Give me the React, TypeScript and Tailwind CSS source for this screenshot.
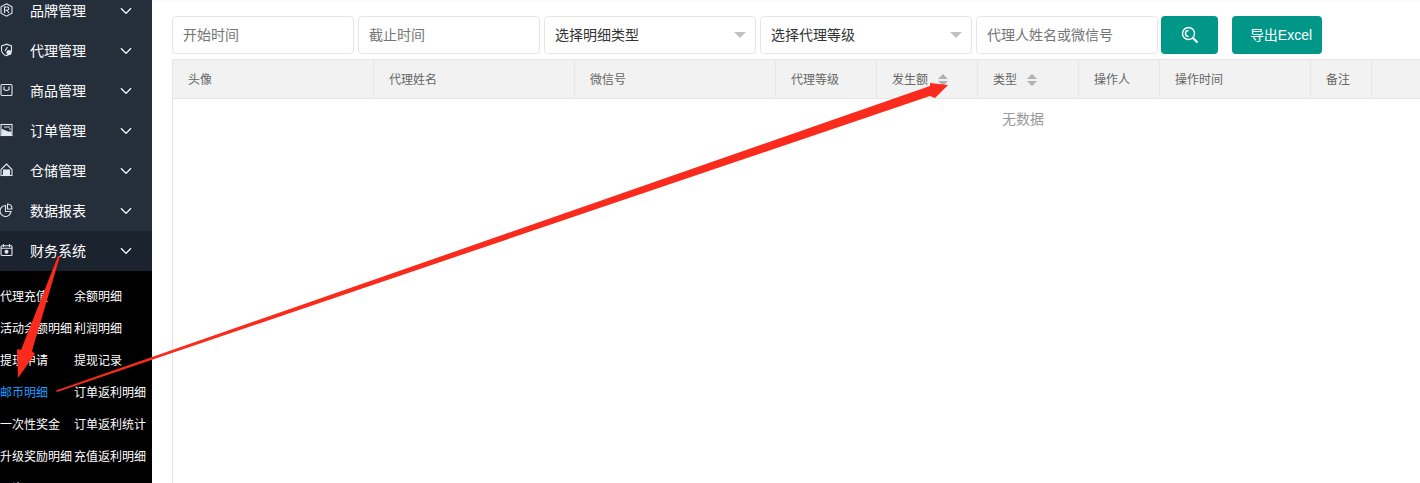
const menus = ["品牌管理", "代理管理", "商品管理", "订单管理", "仓储管理", "数据报表"];

const subItems = [
  ["代理充值", "余额明细"],
  ["活动余额明细", "利润明细"],
  ["提现申请", "提现记录"],
  ["邮币明细", "订单返利明细"],
  ["一次性奖金", "订单返利统计"],
  ["升级奖励明细", "充值返利明细"],
  ["工资", ""],
];

const columns = [
  { label: "头像", width: "w-[201px]" },
  { label: "代理姓名", width: "w-[201px]" },
  { label: "微信号", width: "w-[201px]" },
  { label: "代理等级", width: "w-[101px]" },
  { label: "发生额", width: "w-[101px]", sort: true },
  { label: "类型", width: "w-[101px]", sort: true },
  { label: "操作人", width: "w-[81px]" },
  { label: "操作时间", width: "w-[151px]" },
  { label: "备注", width: "w-[61px]" },
];

function MenuIcon({ index }: { index: number }) {
  const paths = [
    <>
      <path d="M6.5 0.8 L12 3.8 V10.2 L6.5 13.2 L1 10.2 V3.8 Z" />
      <path d="M4.5 10 V4 H7.2 Q8.8 4 8.8 5.6 T7.2 7.2 H4.5 M7 7.2 L9 10" />
    </>,
    <>
      <path d="M1.5 3 L6.5 1.2 L11.5 3 V7.5 Q11 11 6.5 12.8 Q2 11 1.5 7.5 Z" />
      <path d="M5 8 L7.5 4" />
      <circle cx="9" cy="9.5" r="2.6" fill="currentColor" stroke="none" />
    </>,
    <>
      <rect x="1" y="1.5" width="11" height="11" rx="1" />
      <path d="M4 3.5 V6.5 Q6.5 8.5 9 6.5 V3.5" />
    </>,
    <>
      <rect x="1" y="1.5" width="11" height="11" />
      <path d="M2 11.5 V6.5 L8 9 H11 V11.5 Z" fill="currentColor" />
      <path d="M4 4 H10 M9 6 H11" />
    </>,
    <>
      <path d="M6.5 1 L12 6.5 V12.5 H1 V6.5 Z" />
      <rect x="3.5" y="7" width="6" height="5.5" fill="currentColor" />
    </>,
    <>
      <path d="M5.5 2.5 A5.5 5.5 0 1 0 11 8.5 H5.5 Z" />
      <path d="M7.5 1 A4.5 4.5 0 0 1 12 6 H7.5 Z" />
    </>,
    <>
      <rect x="1" y="2.8" width="11" height="9.7" rx="1" />
      <path d="M3.5 1 V4 M9.5 1 V4 M1 5.2 H12" />
      <circle cx="6.5" cy="8.8" r="2" fill="currentColor" stroke="none" />
    </>,
  ];
  return (
    <svg viewBox="0 0 13 14" className="-mt-[2px] h-[14px] w-[13px] shrink-0 text-[#e4e8ee]" fill="none" stroke="currentColor" strokeWidth="1.1">
      {paths[index]}
    </svg>
  );
}

function Chevron() {
  return (
    <svg viewBox="0 0 12 8" className="h-[8px] w-[12px] text-white" fill="none" stroke="currentColor" strokeWidth="1.3">
      <path d="M1 1.2 L6 6.4 L11 1.2" />
    </svg>
  );
}

function MenuRow({ label, index, active }: { label: string; index: number; active?: boolean }) {
  return (
    <div className={`flex h-10 items-center text-sm text-white ${active ? "bg-[#1b232f]" : ""}`}>
      <MenuIcon index={index} />
      <span className="ml-[17px] w-[90px] shrink-0">{label}</span>
      <Chevron />
    </div>
  );
}

function Sidebar() {
  return (
    <aside className="h-[483px] w-[152px] shrink-0 overflow-hidden bg-[#252f3c]">
      <div className="-mt-[9px]">
        {menus.map((label, i) => (
          <MenuRow key={label} label={label} index={i} />
        ))}
        <MenuRow label="财务系统" index={6} active />
      </div>
      <div className="h-[300px] bg-black pt-[10px] text-xs text-white">
        {subItems.map(([left, right]) => (
          <div key={left} className="flex h-8 items-center whitespace-nowrap">
            <span className={`w-[74px] shrink-0 ${left === "邮币明细" ? "text-[#1e9fff]" : ""}`}>{left}</span>
            <span>{right}</span>
          </div>
        ))}
      </div>
    </aside>
  );
}

function TextField({ placeholder, width }: { placeholder: string; width: string }) {
  return (
    <div className={`flex h-[38px] items-center rounded-sm border border-[#e6e6e6] bg-white pl-[10px] text-sm text-[#757575] ${width}`}>
      {placeholder}
    </div>
  );
}

function SelectField({ label }: { label: string }) {
  return (
    <div className="flex h-[38px] w-[212px] items-center justify-between rounded-sm border border-[#e6e6e6] bg-white pl-[10px] pr-[4px] text-sm text-[#333333]">
      <span>{label}</span>
      <span className="mr-[5px] h-0 w-0 border-x-[6px] border-t-[6px] border-x-transparent border-t-[#c2c2c2]" />
    </div>
  );
}

function SortCaret() {
  return (
    <span className="ml-[10px] inline-flex flex-col gap-[2px]">
      <span className="h-0 w-0 border-x-[5px] border-b-[5px] border-x-transparent border-b-[#b2b2b2]" />
      <span className="h-0 w-0 border-x-[5px] border-t-[5px] border-x-transparent border-t-[#b2b2b2]" />
    </span>
  );
}

function Filters() {
  return (
    <div className="flex items-center gap-1">
      <TextField placeholder="开始时间" width="w-[182px]" />
      <TextField placeholder="截止时间" width="w-[182px]" />
      <SelectField label="选择明细类型" />
      <SelectField label="选择代理等级" />
      <TextField placeholder="代理人姓名或微信号" width="w-[182px]" />
      <button className="-ml-[1px] flex h-[38px] w-[57px] items-center justify-center rounded-sm bg-[#009688] text-white">
        <svg viewBox="0 0 18 18" className="h-[18px] w-[18px]" fill="none" stroke="currentColor" strokeWidth="1.4">
          <circle cx="7.5" cy="7.5" r="6" />
          <path d="M7.5 4.5 A3 3 0 0 0 7.5 10.5" />
          <path d="M12 12 L16.5 16.5" strokeWidth="2.2" />
        </svg>
      </button>
      <button className="ml-[10px] h-[38px] w-[90px] rounded-sm bg-[#009688] pl-[8px] text-sm text-white">导出Excel</button>
    </div>
  );
}

function DataTable() {
  return (
    <div className="mt-[5px] min-h-0 flex-1 border-l border-[#e6e6e6]">
      <div className="flex h-10 border-y border-[#e6e6e6] bg-[#f2f2f2]">
        {columns.map((col) => (
          <div key={col.label} className={`flex items-center border-r border-[#e6e6e6] pl-[15px] pt-[1px] text-xs text-[#666666] ${col.width}`}>
            {col.label}
            {col.sort && <SortCaret />}
          </div>
        ))}
      </div>
      <div className="py-[10px] pl-[829px] text-sm leading-[20px] text-[#999999]">无数据</div>
    </div>
  );
}

export default function App() {
  return (
    <div
      className="relative flex h-[483px] w-[1420px] overflow-hidden bg-white"
      style={{ fontFamily: '"Liberation Sans", "Noto Sans CJK SC", sans-serif' }}
    >
      <Sidebar />
      <main className="flex min-w-0 flex-1 flex-col">
        <div className="h-[2px] bg-[#f8fafd]" />
        <div className="flex flex-1 flex-col pl-5 pt-[14px]">
          <Filters />
          <DataTable />
        </div>
      </main>
      {/* Red annotation arrows drawn over the screenshot */}
      <svg className="pointer-events-none absolute left-0 top-0" width="1420" height="483" viewBox="0 0 1420 483">
        <polygon points="60,256 32,351 35,354 18,378 17,349 21,350 58,256" fill="#fa2a1c" />
        <polygon points="56,390.5 930,86 930,83 948,85 935,98 930,96 57,392" fill="#fa2a1c" />
      </svg>
    </div>
  );
}
